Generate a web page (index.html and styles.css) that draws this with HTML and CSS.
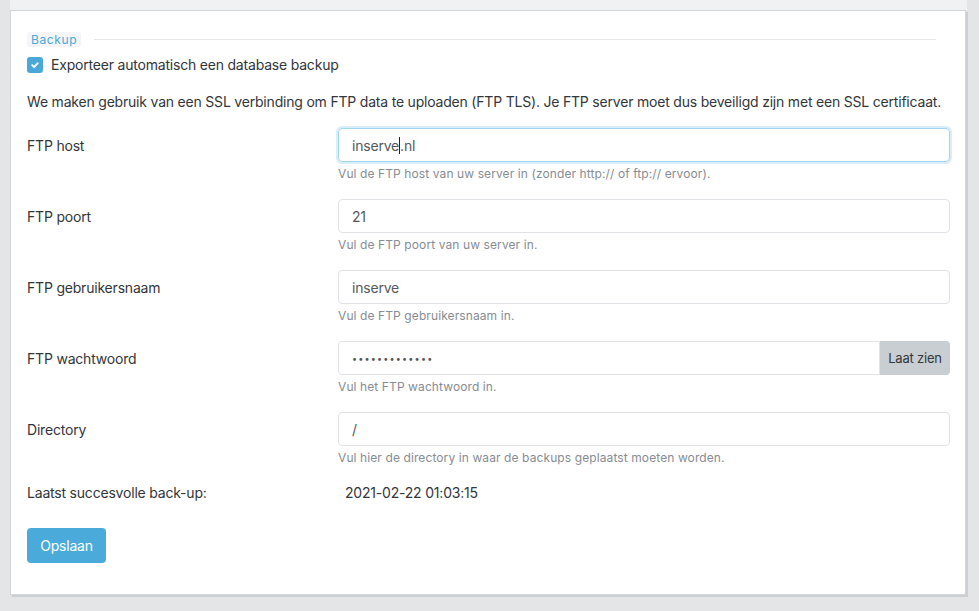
FILE: index.html
```html
<!DOCTYPE html>
<html lang="nl">
<head>
<meta charset="utf-8">
<title>Backup</title>
<link rel="stylesheet" href="styles.css">
</head>
<body>
<div class="topstrip"></div>
<div class="card">
  <div class="legend-row">
    <span class="legend">Backup</span>
    <span class="legend-line"></span>
  </div>
  <label class="check-row">
    <span class="checkbox"><svg width="10" height="10" viewBox="0 0 10 10"><path d="M2.2 5.2 L4.1 7 L7.8 3.2" fill="none" stroke="#fff" stroke-width="1.8" stroke-linecap="round" stroke-linejoin="round"/></svg></span>
    <span class="check-label">Exporteer automatisch een database backup</span>
  </label>
  <p class="intro">We maken gebruik van een SSL verbinding om FTP data te uploaden (FTP TLS). Je FTP server moet dus beveiligd zijn met een SSL certificaat.</p>

  <div class="group">
    <div class="label">FTP host</div>
    <div class="field">
      <div class="input focus"><span>inserve</span><span class="caret"></span><span>.nl</span></div>
      <div class="help">Vul de FTP host van uw server in (zonder http:// of ftp:// ervoor).</div>
    </div>
  </div>
  <div class="group">
    <div class="label">FTP poort</div>
    <div class="field">
      <div class="input">21</div>
      <div class="help">Vul de FTP poort van uw server in.</div>
    </div>
  </div>
  <div class="group">
    <div class="label">FTP gebruikersnaam</div>
    <div class="field">
      <div class="input">inserve</div>
      <div class="help">Vul de FTP gebruikersnaam in.</div>
    </div>
  </div>
  <div class="group">
    <div class="label">FTP wachtwoord</div>
    <div class="field">
      <div class="input-group">
        <div class="input pw">•••••••••••••</div>
        <button class="addon" type="button">Laat zien</button>
      </div>
      <div class="help">Vul het FTP wachtwoord in.</div>
    </div>
  </div>
  <div class="group">
    <div class="label">Directory</div>
    <div class="field">
      <div class="input">/</div>
      <div class="help">Vul hier de directory in waar de backups geplaatst moeten worden.</div>
    </div>
  </div>
  <div class="static-row">
    <div class="label">Laatst succesvolle back-up:</div>
    <div class="static-value">2021-02-22 01:03:15</div>
  </div>
  <button class="btn" type="button">Opslaan</button>
</div>
</body>
</html>
```
FILE: styles.css
```css
* { box-sizing: border-box; }
html, body { margin: 0; padding: 0; }
body {
  background: #e4e5e7;
  font-family: Inter, "Noto Sans", sans-serif;
  font-size: 14px;
  letter-spacing: -0.2px;
  color: #33363a;
  height: 611px;
  overflow: hidden;
}
.topstrip {
  margin-left: 10px;
  width: 957px;
  height: 10px;
  background: #f0f1f3;
}
.card {
  margin-left: 10px;
  width: 956px;
  height: 585px;
  background: #fff;
  border: 1px solid #d3d6d9;
  box-shadow: 2px 2px 0 #cbcfd3;
  padding: 21px 16px 0 16px;
}
.legend-row {
  display: flex;
  align-items: center;
  height: 15px;
}
.legend {
  background: #f4f5f6;
  color: #4aa8d8;
  font-size: 12px;
  letter-spacing: 0.6px;
  line-height: 15px;
  padding: 0 4px;
  border-radius: 3px;
}
.legend-line {
  flex: 1;
  height: 1px;
  background: #e6e7e9;
  margin: 0 13px 0 13px;
}
.check-row {
  display: flex;
  align-items: center;
  margin-top: 10px;
  height: 16px;
}
.checkbox {
  width: 16px;
  height: 16px;
  border-radius: 3px;
  background: #4aa8d8;
  display: flex;
  align-items: center;
  justify-content: center;
}
.check-label {
  margin-left: 8px;
  line-height: 16px;
}
.intro {
  margin: 19px 0 16px 0;
  line-height: 20px;
  white-space: nowrap;
}
.group {
  display: grid;
  grid-template-columns: 311px 612px;
  margin-bottom: 18px;
}
.label {
  line-height: 35px;
}
.input {
  height: 34px;
  border: 1px solid #e0e2e5;
  border-radius: 4px;
  padding: 0 13px;
  display: flex;
  align-items: center;
  color: #55595e;
  font-size: 14px;
}
.input.focus {
  border-color: #a3d5ef;
  box-shadow: 0 0 0 2px #d8eef9;
}
.caret {
  display: inline-block;
  width: 1px;
  height: 17px;
  background: #222;
}
.input-group {
  display: flex;
}
.input.pw {
  flex: 1;
  border-radius: 4px 0 0 4px;
  font-size: 9px;
  letter-spacing: 1.2px;
  color: #555;
}
.addon {
  width: 70px;
  height: 34px;
  border: none;
  background: #c9ced2;
  border-radius: 0 4px 4px 0;
  font-family: Inter, "Noto Sans", sans-serif;
  font-size: 13px;
  letter-spacing: -0.2px;
  color: #33363a;
  padding: 0;
}
.help {
  margin-top: 5px;
  font-size: 12px;
  letter-spacing: 0.1px;
  line-height: 14px;
  color: #878c92;
}
.static-row {
  display: grid;
  grid-template-columns: 318px 605px;
  line-height: 20px;
}
.static-row .label { line-height: 20px; }
.btn {
  margin-top: 25px;
  width: 79px;
  height: 35px;
  border: none;
  border-radius: 4px;
  background: #4aabdb;
  color: #fff;
  font-family: Inter, "Noto Sans", sans-serif;
  font-size: 14px;
  letter-spacing: -0.2px;
  padding: 0;
}
```
